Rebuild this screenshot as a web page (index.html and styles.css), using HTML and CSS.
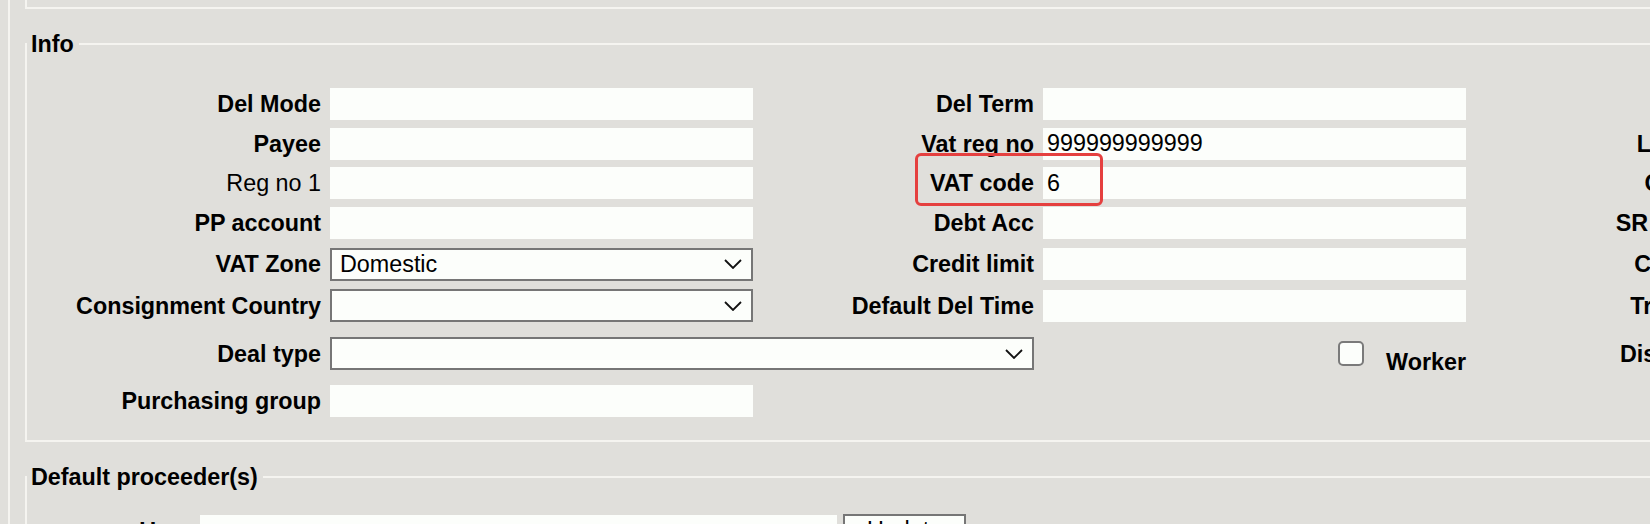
FILE: index.html
```html
<!DOCTYPE html>
<html lang="en">
<head>
    <meta charset="UTF-8">
    <meta name="viewport" content="width=device-width, initial-scale=1.0">
    <title>Customer - Info</title>
    <link rel="stylesheet" href="styles.css">
</head>
<body>
	<div class="page">
		<div class="prevSection"></div>

		<fieldset class="group">
			<legend>Info</legend>
			<div class="infoGrid">
				<!-- row 1 -->
				<label class="lbl">Del Mode</label>
				<input class="fld" type="text">
				<label class="lbl">Del Term</label>
				<input class="fld" type="text">
				<label class="lbl"></label>
				<span></span>
				<!-- row 2 -->
				<label class="lbl">Payee</label>
				<input class="fld" type="text">
				<label class="lbl">Vat reg no</label>
				<input class="fld" type="text" value="999999999999">
				<label class="lbl">Language</label>
				<input class="fld" type="text">
				<!-- row 3 -->
				<label class="lbl plain">Reg no 1</label>
				<input class="fld" type="text">
				<label class="lbl hl">VAT code</label>
				<input class="fld" type="text" value="6">
				<label class="lbl">Currency</label>
				<input class="fld" type="text">
				<!-- row 4 -->
				<label class="lbl">PP account</label>
				<input class="fld" type="text">
				<label class="lbl">Debt Acc</label>
				<input class="fld" type="text">
				<label class="lbl">SR Account</label>
				<input class="fld" type="text">
				<!-- row 5 -->
				<label class="lbl">VAT Zone</label>
				<select class="sel">
					<option>Domestic</option>
				</select>
				<label class="lbl">Credit limit</label>
				<input class="fld" type="text">
				<label class="lbl">Collection</label>
				<input class="fld" type="text">
				<!-- row 6 -->
				<label class="lbl">Consignment Country</label>
				<select class="sel">
					<option></option>
				</select>
				<label class="lbl">Default Del Time</label>
				<input class="fld" type="text">
				<label class="lbl">Trade type</label>
				<input class="fld" type="text">
				<!-- row 7 -->
				<label class="lbl">Deal type</label>
				<select class="sel wide">
					<option></option>
				</select>
				<div class="chkCell">
					<input class="chk" type="checkbox">
					<span class="chkText">Worker</span>
				</div>
				<label class="lbl">Discount %</label>
				<input class="fld" type="text">
				<!-- row 8 -->
				<label class="lbl">Purchasing group</label>
				<input class="fld" type="text">
			</div>
		</fieldset>

		<fieldset class="group">
			<legend>Default proceeder(s)</legend>
			<div class="procRow">
				<label class="lbl">User</label>
				<input class="fld" type="text">
				<button class="btn" type="button">Update</button>
			</div>
		</fieldset>
	</div>
</body>
</html>
```

FILE: styles.css
```css
html, body {
    margin: 0;
    padding: 0;
    overflow: hidden;
    background: #e0dfdb;
    font-family: "Liberation Sans", Arial, sans-serif;
    font-size: 23.33px;
    color: #000;
}
.page {
    width: 2400px;
    min-height: 600px;
    margin-left: 8px;
    padding-left: 15px;
    border-left: 2px solid #f5f4f0;
}
.prevSection {
    height: 7px;
    border-left: 2px solid #f5f4f0;
    border-bottom: 2px solid #f5f4f0;
}
.group {
    margin: 22px 0 0;
    padding: 0;
    min-width: 0;
    border: 2px solid #f5f4f0;
}
.group legend {
    margin: 0;
    padding: 0 5px 0 4px;
    font-weight: bold;
    line-height: 26px;
}

/* three label/field column pairs */
.infoGrid {
    display: grid;
    grid-template-columns: repeat(3, 272px 423px);
    grid-template-rows: 32px 31px 32px 32px 34px 33px 47px 32px;
    column-gap: 9px;
    row-gap: 8px;
    padding: 31px 0 23px 22px;
}
.lbl {
    align-self: center;
    text-align: right;
    font-weight: bold;
    line-height: 26px;
    white-space: nowrap;
}
.lbl.plain {
    font-weight: normal;
}
.fld {
    align-self: center;
    box-sizing: border-box;
    width: 100%;
    height: 32px;
    margin: 0;
    padding: 0 4px;
    border: 0;
    border-radius: 0;
    background: #fcfefb;
    font: inherit;
    color: #000;
    outline: none;
}
.sel {
    align-self: center;
    box-sizing: border-box;
    width: 100%;
    height: 33px;
    margin: 0;
    padding: 0 40px 0 8px;
    border: 2px solid #767676;
    border-radius: 0;
    -webkit-appearance: none;
    appearance: none;
    background: #fcfefb url("data:image/svg+xml,%3Csvg xmlns='http://www.w3.org/2000/svg' width='18' height='10' viewBox='0 0 18 10'%3E%3Cpath d='M1 1l8 8 8-8' fill='none' stroke='%23111' stroke-width='1.8'/%3E%3C/svg%3E") no-repeat right 9px center;
    font: inherit;
    color: #000;
}
.sel.wide {
    grid-column: span 2;
}

/* highlight drawn round the VAT code row */
.hl {
    position: relative;
}
.hl::after {
    content: "";
    position: absolute;
    left: 153px;
    top: -17px;
    width: 188px;
    height: 53px;
    box-sizing: border-box;
    border: 3px solid #e5403f;
    border-radius: 6px;
}

.chkCell {
    display: flex;
    justify-content: flex-end;
    align-items: center;
    gap: 22px;
}
.chk {
    -webkit-appearance: none;
    appearance: none;
    box-sizing: border-box;
    width: 26px;
    height: 25px;
    margin: 0;
    border: 2px solid #7a7a7a;
    border-radius: 5px;
    background: #fcfefb;
}
.chkText {
    margin-top: 17px;
    font-weight: bold;
    line-height: 26px;
}

.procRow {
    display: flex;
    align-items: center;
    padding: 24px 0 20px;
}
.procRow .lbl {
    flex: 0 0 164px;
    margin-right: 9px;
}
.procRow .fld {
    flex: 0 0 637px;
}
.btn {
    flex: 0 0 123px;
    height: 33px;
    margin-left: 6px;
    padding: 0;
    border: 2px solid #767676;
    background: #fcfefb;
    font: inherit;
    color: #000;
}
```
